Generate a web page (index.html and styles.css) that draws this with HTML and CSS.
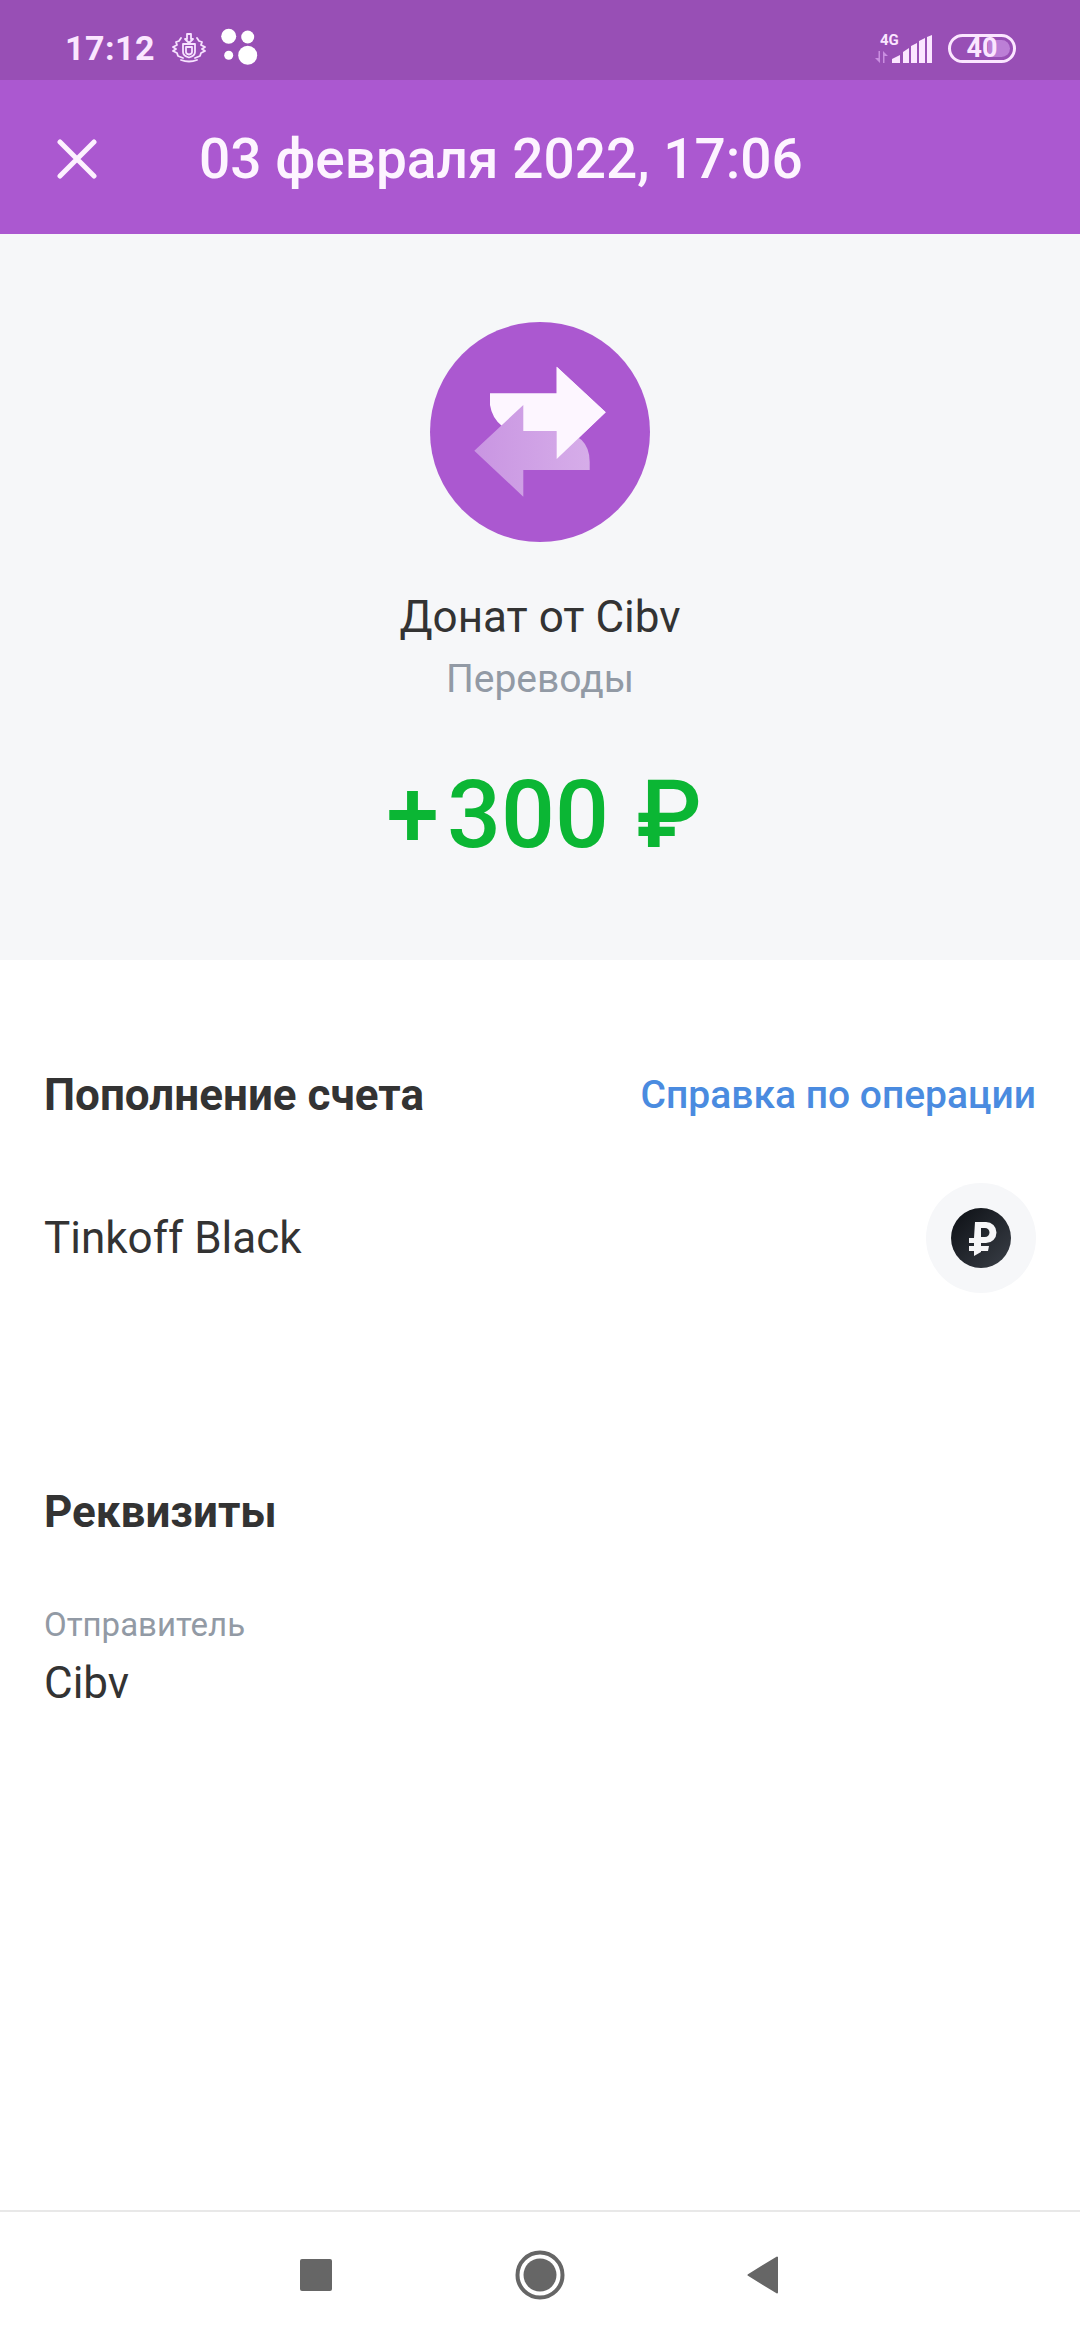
FILE: index.html
```html
<!DOCTYPE html>
<html lang="ru">
<head>
<meta charset="utf-8">
<title>Операция</title>
<link rel="stylesheet" href="styles.css">
</head>
<body>
<div class="screen">
  <header class="status">
    <div class="status-left">
      <span class="time">17:12</span>
      <svg class="crest" width="34" height="30" viewBox="0 0 34 30" fill="none" stroke="#f7e2ff" stroke-width="1.800" stroke-linejoin="round" stroke-linecap="round">
        <path d="M15 1h4v5h2l-4 4-4-4h2z"/>
        <path d="M11 11h12v8q0 4-6 5.500-6-1.500-6-5.500z"/>
        <path d="M14 14h6v5q0 2-3 2.500-3-.5-3-2.500z"/>
        <path d="M9 5 7 8 4 9l1 3-4 2 3 2-3 2 4 2 1 3 5 2"/>
        <path d="M25 5l2 3 3 1-1 3 4 2-3 2 3 2-4 2-1 3-5 2"/>
        <path d="M9 27q8 3 16 0"/>
      </svg>
      <svg class="dots" width="38" height="38" viewBox="0 0 38 38" fill="#fff">
        <circle cx="8.700" cy="8.300" r="7.500"/><circle cx="27.700" cy="9" r="6.500"/><circle cx="8.700" cy="27.300" r="4.500"/><circle cx="27.700" cy="27.300" r="9.500"/>
      </svg>
    </div>
    <div class="status-right">
      <div class="net">
        <span class="net-label">4G</span>
        <svg width="13" height="12" viewBox="0 0 13 12" fill="#c98ee0"><path d="M5 0v12L0 7h3.500V0zM8 0l5 5H9.500v7H8z"/></svg>
      </div>
      <svg class="bars" width="40" height="30" viewBox="0 0 40 30" fill="#fbe6ff">
        <path d="M0 29v-4l8-4v8zM11 29V18l6-4v15zM19 29V12l6-3v20zM27 29V7l6-3v25zM35 29V3l5-2v28z"/>
      </svg>
      <div class="battery">
        <div class="battery-level"></div>
        <span class="battery-value">40</span>
      </div>
    </div>
  </header>

  <div class="appbar">
    <svg class="close" width="40" height="40" viewBox="0 0 40 40" fill="none" stroke="#fdf1ff" stroke-width="5" stroke-linecap="round">
      <path d="M3 3l34 34M37 3l-34 34"/>
    </svg>
    <h1 class="appbar-title">03 февраля 2022, 17:06</h1>
  </div>

  <section class="hero">
    <svg class="hero-icon" width="220" height="220" viewBox="0 0 220 220">
      <defs><linearGradient id="back"><stop offset="0" stop-color="#c995e2"/><stop offset="1" stop-color="#d6ade9"/></linearGradient></defs>
      <circle cx="110" cy="110" r="110" fill="#ab58d0"/>
      <path fill="#fdf6ff" d="M175.700 90.300 126.700 44.700V71.300H60V83Q62 96 72 104L85 112H126.700V137z"/>
      <path fill="url(#back)" d="M44.300 128.700 93.300 83V109H126Q159.700 111 159.700 140V148H93.300V174.700z"/>
      <path fill="#fdf6ff" d="M126.700 44.700 175.700 90.300 126.700 137z"/>
    </svg>
    <div class="hero-name">Донат от Cibv</div>
    <div class="hero-category">Переводы</div>
    <div class="hero-amount"><span class="amount-sign">+</span>300 ₽</div>
  </section>

  <main class="content">
    <div class="row-head">
      <h2 class="section-title">Пополнение счета</h2>
      <span class="help-link">Справка по операции</span>
    </div>
    <div class="account">
      <span class="account-name">Tinkoff Black</span>
      <span class="account-badge">
        <svg width="62" height="62" viewBox="0 0 62 62">
          <defs><linearGradient id="coin" x1="0" y1="0" x2="1" y2="1"><stop offset="0" stop-color="#0c0f14"/><stop offset="1" stop-color="#3a3f47"/></linearGradient></defs>
          <circle cx="31" cy="31" r="30" fill="url(#coin)"/>
          <path fill="#f6f6f8" fill-rule="evenodd" d="M25 15h11a10.500 10.500 0 0 1 0 21H31v3h8l-1 5h-7v1l-7 4v-5h-5v-5h5v-3h-5v-5h5zM31 21v9h4a4.500 4.500 0 0 0 0-9z"/>
        </svg>
      </span>
    </div>
    <h2 class="section-title details-title">Реквизиты</h2>
    <div class="field-label">Отправитель</div>
    <div class="field-value">Cibv</div>
  </main>

  <nav class="navbar">
    <span class="nav-square"></span>
    <svg width="50" height="50" viewBox="0 0 50 50"><circle cx="25" cy="25" r="22.500" fill="none" stroke="#666" stroke-width="4"/><circle cx="25" cy="25" r="16.500" fill="#666"/></svg>
    <svg width="31" height="38" viewBox="0 0 31 38"><path fill="#666" stroke="#666" stroke-width="2" stroke-linejoin="round" d="M30 1.500V36.500L1.500 19z"/></svg>
  </nav>
</div>
</body>
</html>
```
FILE: styles.css
```css
* { box-sizing: border-box; }
html, body { margin: 0; padding: 0; }
body { font-family: Roboto, "Liberation Sans", sans-serif; background: #fff; color: #333; }
.screen { width: 1080px; height: 2340px; display: flex; flex-direction: column; overflow: hidden; }

.status { height: 80px; background: #984fb5; display: flex; justify-content: space-between; align-items: center; padding: 16px 64px 0 65px; color: #fbe6ff; }
.status-left { display: flex; align-items: center; }
.time { font-size: 34px; font-weight: 700; line-height: 40px; letter-spacing: .5px; }
.crest { margin-left: 17px; }
.dots { margin-left: 14px; margin-top: -2px; }
.status-right { display: flex; align-items: flex-end; }
.net { display: flex; flex-direction: column; align-items: flex-start; width: 17px; height: 29px; gap: 5px; }
.net-label { font-size: 15px; font-weight: 700; line-height: 12px; margin-left: 5px; white-space: nowrap; }
.bars { display: block; margin-bottom: -1px; }
.battery { position: relative; width: 68px; height: 29px; margin-left: 16px; border: 3.500px solid #fbe6ff; border-radius: 15px; display: flex; align-items: center; justify-content: center; }
.battery-level { position: absolute; top: 3px; bottom: 3px; left: 3px; right: 3px; border-radius: 9px; background: linear-gradient(90deg, transparent 0 60%, #bc7fd6 60%); }
.battery-value { position: relative; font-size: 27px; font-weight: 700; color: #fbe6ff; line-height: 24px; }

.appbar { height: 154px; background: #ab58d0; display: flex; align-items: center; padding: 4px 0 0 57px; color: #fdf4ff; }
.appbar-title { margin: 0 0 0 102px; font-size: 55px; font-weight: 500; line-height: 60px; }

.hero { height: 726px; background: #f6f7f9; display: flex; flex-direction: column; align-items: center; padding-top: 88px; }
.hero-name { margin-top: 50px; font-size: 44px; line-height: 50px; color: #333; }
.hero-category { margin-top: 14px; font-size: 39px; line-height: 46px; color: #929aa5; }
.hero-amount { margin-top: 59px; padding-left: 8px; font-size: 95px; font-weight: 500; line-height: 108px; color: #0bb634; word-spacing: 4px; }
.amount-sign { margin-right: 8px; }

.content { flex: 1; padding: 0 44px; }
.row-head { display: flex; justify-content: space-between; align-items: center; margin-top: 110px; height: 50px; }
.section-title { margin: 0; font-size: 44px; font-weight: 700; line-height: 50px; color: #333; }
.help-link { font-size: 39px; font-weight: 500; color: #4a8be0; line-height: 50px; }
.account { display: flex; justify-content: space-between; align-items: center; margin-top: 63px; height: 110px; }
.account-name { font-size: 44px; line-height: 50px; color: #333; }
.account-badge { width: 110px; height: 110px; border-radius: 50%; background: #f6f7f9; display: flex; align-items: center; justify-content: center; }
.details-title { margin-top: 194px; }
.field-label { margin-top: 69px; font-size: 33px; line-height: 38px; color: #929aa5; }
.field-value { margin-top: 14px; font-size: 44px; line-height: 50px; color: #333; }

.navbar { height: 130px; border-top: 2px solid #e8e8e8; background: #fff; display: flex; align-items: center; padding: 0 302px 2px 300px; justify-content: space-between; }
.nav-square { width: 32px; height: 32px; border-radius: 2px; background: #666; }
```
